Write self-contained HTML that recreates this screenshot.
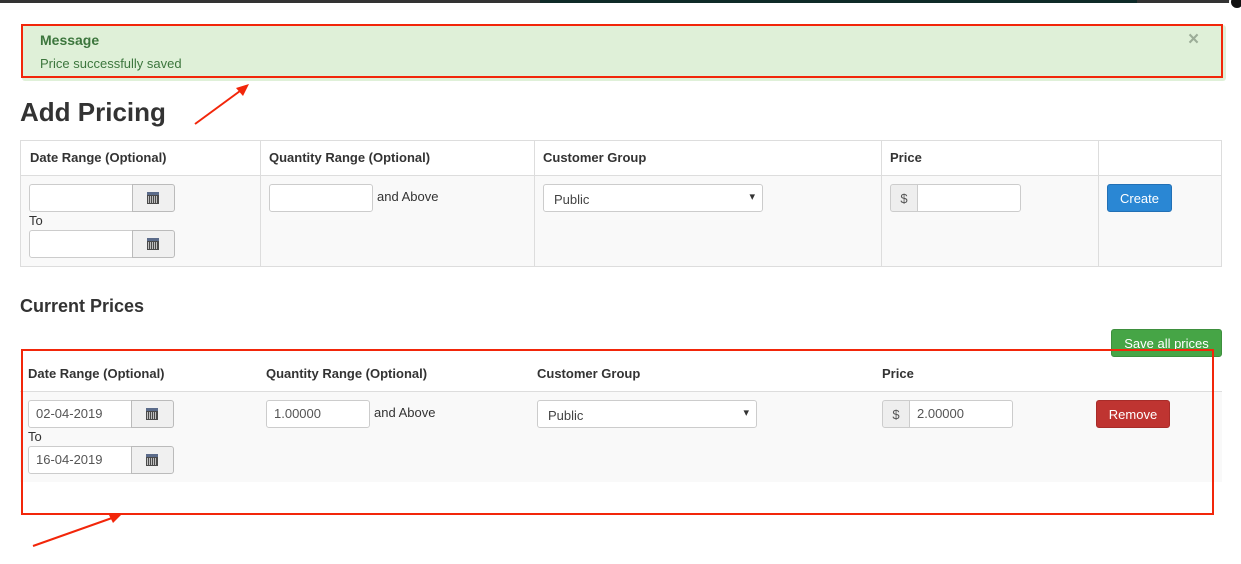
<!DOCTYPE html>
<html><head><style>
*{box-sizing:border-box;margin:0;padding:0}
body{width:1241px;height:564px;position:relative;background:#fff;font-family:"Liberation Sans",sans-serif;color:#333;font-size:13px;overflow:hidden}
.a{position:absolute}
.inp{position:absolute;background:#fff;border:1px solid #ccc;border-radius:3px;height:28px;font-size:13px;color:#555;padding:6px 7px;line-height:14px}
.cal{position:absolute;background:#f0f0f0;border:1px solid #bbb;border-radius:0 3px 3px 0;height:28px;width:43px}
.cal i{position:absolute;left:14px;top:7px;width:12px;height:12px;background:#4a4a4a;border-top:3px solid #5b6b8a}
.cal i:after{content:"";position:absolute;left:1px;top:1px;width:10px;height:7px;background:repeating-linear-gradient(90deg,#ddd 0 1px,#4a4a4a 1px 2px),#ddd;opacity:.8}
.th{position:absolute;font-weight:bold;font-size:13px;color:#333}
.sel{position:absolute;background:#fff;border:1px solid #ccc;border-radius:3px;height:28px;width:220px;padding:7px 10px;font-size:13px;color:#444}
.sel:after{content:"▾";position:absolute;right:7px;top:5px;font-size:11px;color:#333}
.dol{position:absolute;background:#eee;border:1px solid #ccc;border-radius:3px 0 0 3px;height:28px;width:28px;text-align:center;padding-top:6px;color:#555}
.btn{position:absolute;color:#fff;border-radius:3px;text-align:center;font-size:13px;height:28px;padding-top:6px}
</style></head><body>
<div class="a" style="left:0;top:0;width:1241px;height:3px;background:#333"></div>
<div class="a" style="left:540px;top:0;width:597px;height:3px;background:#0e2a28"></div>
<div class="a" style="left:1229px;top:-6px;width:16px;height:16px;border-radius:50%;background:#111;border:2px solid #fff"></div>

<div class="a" style="left:22px;top:25px;width:1204px;height:56px;background:#dff0d8;border-radius:3px"></div>
<div class="a" style="left:21px;top:24px;width:1202px;height:54px;border:2px solid #f2260a"></div>
<div class="a" style="left:40px;top:32px;font-weight:bold;font-size:14px;color:#3c763d">Message</div>
<div class="a" style="left:40px;top:56px;font-size:13px;color:#3c763d">Price successfully saved</div>
<div class="a" style="left:1188px;top:29px;font-size:19px;color:#9cad98;font-weight:bold">×</div>

<svg class="a" style="left:0;top:0" width="1241" height="564">
<line x1="195" y1="124" x2="240" y2="91" stroke="#f2260a" stroke-width="2"/>
<polygon points="249,84 236,88 243,96" fill="#f2260a"/>
<line x1="33" y1="546" x2="112" y2="518" stroke="#f2260a" stroke-width="2"/>
<polygon points="121,515 108,513 113,523" fill="#f2260a"/>
</svg>

<div class="a" style="left:20px;top:97px;font-size:26px;font-weight:bold;color:#333">Add Pricing</div>

<!-- table 1 -->
<div class="a" style="left:20px;top:140px;width:1202px;height:127px;border:1px solid #ddd"></div>
<div class="a" style="left:21px;top:175px;width:1200px;height:91px;background:#f9f9f9;border-top:1px solid #ddd"></div>
<div class="a" style="left:260px;top:141px;width:1px;height:125px;background:#ddd"></div>
<div class="a" style="left:534px;top:141px;width:1px;height:125px;background:#ddd"></div>
<div class="a" style="left:881px;top:141px;width:1px;height:125px;background:#ddd"></div>
<div class="a" style="left:1098px;top:141px;width:1px;height:125px;background:#ddd"></div>
<div class="th" style="left:30px;top:150px">Date Range (Optional)</div>
<div class="th" style="left:269px;top:150px">Quantity Range (Optional)</div>
<div class="th" style="left:543px;top:150px">Customer Group</div>
<div class="th" style="left:890px;top:150px">Price</div>
<div class="inp" style="left:29px;top:184px;width:104px;border-radius:3px 0 0 3px"></div>
<div class="cal" style="left:132px;top:184px"><i></i></div>
<div class="a" style="left:29px;top:213px">To</div>
<div class="inp" style="left:29px;top:230px;width:104px;border-radius:3px 0 0 3px"></div>
<div class="cal" style="left:132px;top:230px"><i></i></div>
<div class="inp" style="left:269px;top:184px;width:104px"></div>
<div class="a" style="left:377px;top:189px">and Above</div>
<div class="sel" style="left:543px;top:184px">Public</div>
<div class="dol" style="left:890px;top:184px">$</div>
<div class="inp" style="left:917px;top:184px;width:104px;border-radius:0 3px 3px 0"></div>
<div class="btn" style="left:1107px;top:184px;width:65px;background:#2a87d4;border:1px solid #2270b5">Create</div>

<div class="a" style="left:20px;top:296px;font-size:18px;font-weight:bold;color:#333">Current Prices</div>
<div class="btn" style="left:1111px;top:329px;width:111px;background:#46a546;border:1px solid #3e8f3e">Save all prices</div>

<!-- table 2 -->
<div class="a" style="left:20px;top:391px;width:1202px;height:91px;background:#f9f9f9;border-top:1px solid #ddd"></div>
<div class="th" style="left:28px;top:366px">Date Range (Optional)</div>
<div class="th" style="left:266px;top:366px">Quantity Range (Optional)</div>
<div class="th" style="left:537px;top:366px">Customer Group</div>
<div class="th" style="left:882px;top:366px">Price</div>
<div class="inp" style="left:28px;top:400px;width:104px;border-radius:3px 0 0 3px">02-04-2019</div>
<div class="cal" style="left:131px;top:400px"><i></i></div>
<div class="a" style="left:28px;top:429px">To</div>
<div class="inp" style="left:28px;top:446px;width:104px;border-radius:3px 0 0 3px">16-04-2019</div>
<div class="cal" style="left:131px;top:446px"><i></i></div>
<div class="inp" style="left:266px;top:400px;width:104px">1.00000</div>
<div class="a" style="left:374px;top:405px">and Above</div>
<div class="sel" style="left:537px;top:400px">Public</div>
<div class="dol" style="left:882px;top:400px">$</div>
<div class="inp" style="left:909px;top:400px;width:104px;border-radius:0 3px 3px 0">2.00000</div>
<div class="btn" style="left:1096px;top:400px;width:74px;background:#bf3431;border:1px solid #a82c29">Remove</div>

<div class="a" style="left:21px;top:349px;width:1193px;height:166px;border:2px solid #f2260a"></div>
</body></html>
